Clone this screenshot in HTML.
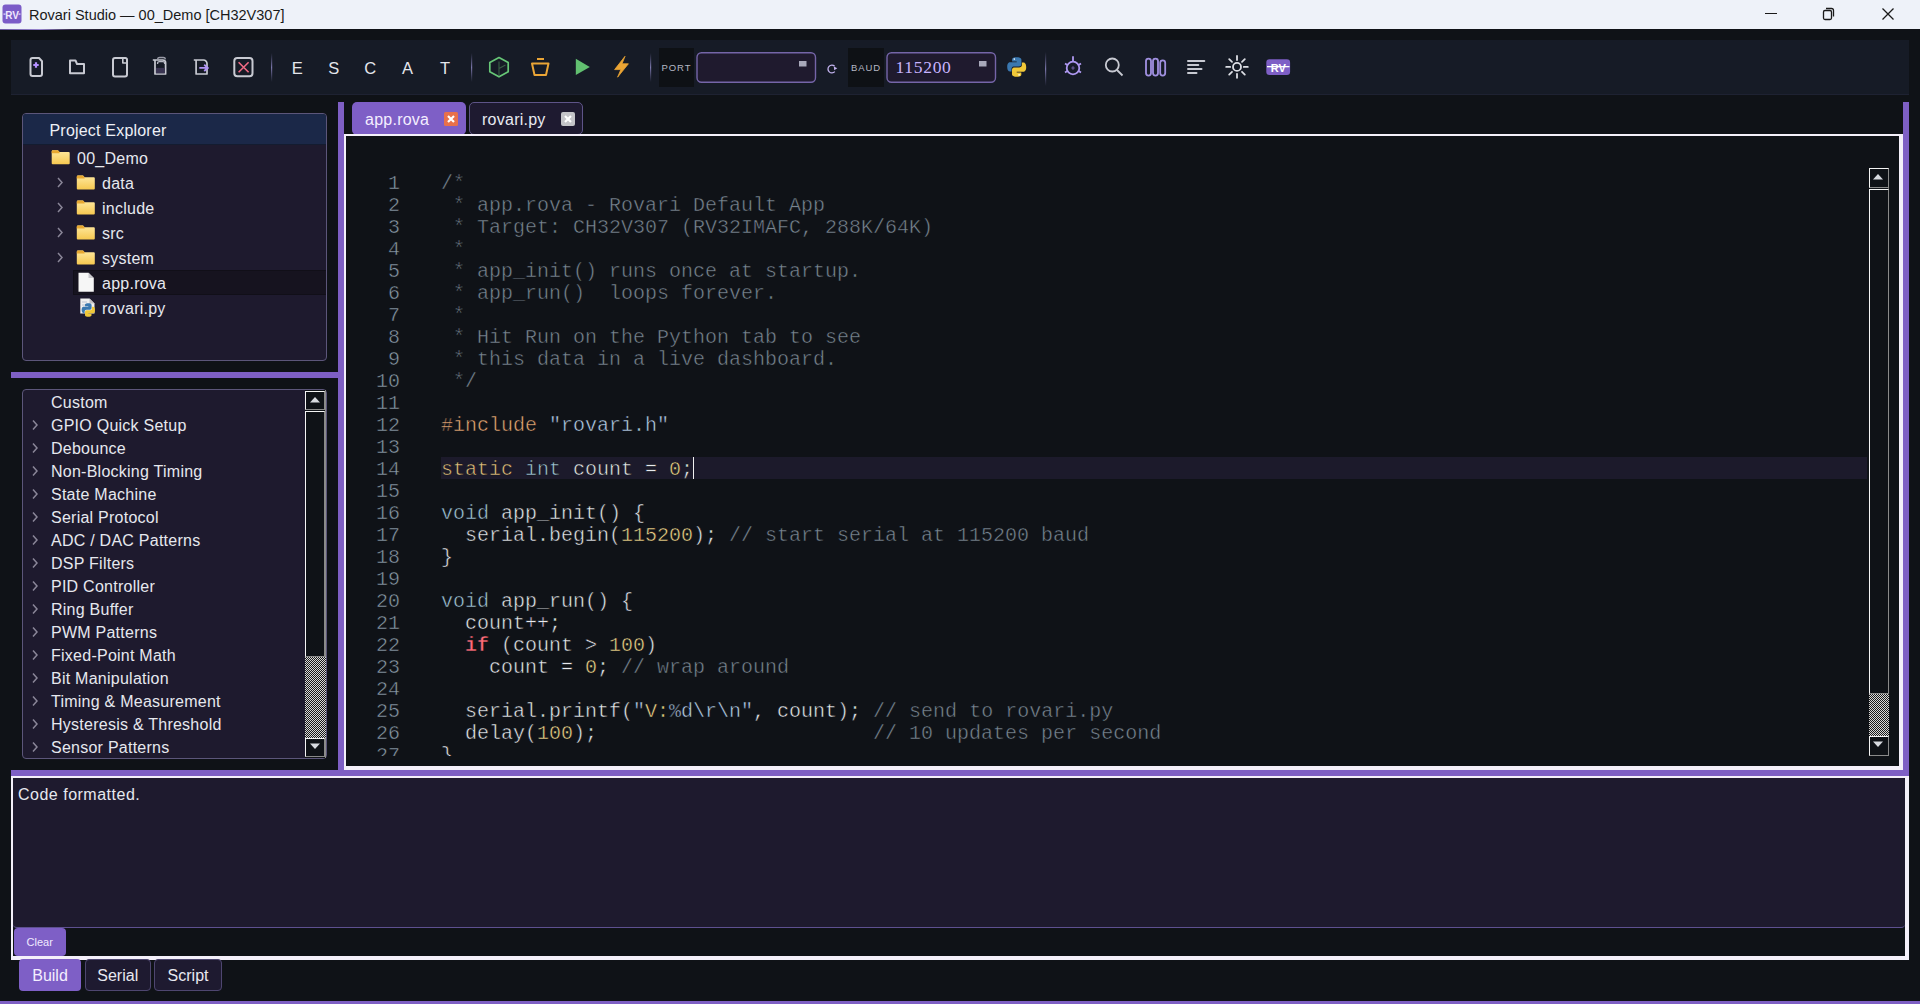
<!DOCTYPE html>
<html><head><meta charset="utf-8">
<style>
*{box-sizing:border-box;margin:0;padding:0}
html,body{width:1920px;height:1004px;overflow:hidden;background:#0f1217;font-family:"Liberation Sans",sans-serif;}
.a{position:absolute}
#title{left:0;top:0;width:1920px;height:29px;background:#eef2f9}
#title .t{left:29px;top:5.5px;font-size:14.5px;color:#1a1a1a;line-height:18px;white-space:pre}
#tline{left:0;top:29px;width:1920px;height:1px;background:linear-gradient(90deg,#6a58a0 0,#9a88d0 40px,#3a3050 70px,#0f1217 120px)}
#toolbar{left:11px;top:40px;width:1898px;height:55px;background:#161b26;border-bottom:1px solid #1e2232}
.sep{width:1px;background:linear-gradient(180deg,rgba(120,115,170,0),#6e6a9a 50%,rgba(120,115,170,0))}
.lbl{background:#0d1014;color:#b4b8c4;font-size:10px;letter-spacing:1px;line-height:38px;text-align:center}
.combo{border:1.5px solid #7565a8;border-radius:5px;background:#1f1a2e}
.sash{background:#7e5fc4}
.panel{background:#1e1a2e;border:1px solid #5c567a;border-radius:4px;overflow:hidden}
.white{border:2px solid #f4f0fa}
.tree{font-size:16px;color:#e6e8ee;line-height:20px;white-space:pre;letter-spacing:0.25px}
.chev{width:6px;height:6px;border-right:1.6px solid #8a8698;border-top:1.6px solid #8a8698;transform:rotate(45deg)}
.code{font-family:"Liberation Mono",monospace;font-size:20px;line-height:22px;white-space:pre;color:#e8eaee;-webkit-text-stroke:0.5px #0f1217}
.ln{color:#8a9aa8;text-align:right;width:60px}
.cm{color:#7a8692}
.kw{color:#e4c080}
.ty{color:#a2c6da}
.nu{color:#f2d68a}
.pp{color:#e8a874}
.st{color:#b8d0ea}
.rd{color:#ff6a78;font-weight:bold}
.sb{background:#0f1217}
.btn3d{border-top:1.5px solid #f4f4f4;border-left:1.5px solid #f4f4f4;border-right:1.5px solid #8a8a8a;border-bottom:1.5px solid #8a8a8a;background:#0f1217}
.checker{background-color:#c8c8c8;background-image:repeating-conic-gradient(#1a1a1a 0 25%,#d8d8d8 0 50%);background-size:2px 2px}
.tbtn{border-radius:4px;font-size:16px;line-height:32px;text-align:center;color:#e8e8f0}
</style></head><body>
<div id="title" class="a">
  <svg class="a" style="left:2px;top:4px" width="20" height="20" viewBox="0 0 20 20"><rect x="0.5" y="0.5" width="19" height="19" rx="3" fill="#7b5cc8"/><text x="10" y="14.5" font-family="Liberation Sans" font-weight="bold" font-size="10" fill="#f0e8ff" text-anchor="middle">RV</text><rect x="1.5" y="9.5" width="2" height="1.2" fill="#e8e0ff"/><rect x="16.5" y="9.5" width="2" height="1.2" fill="#e8e0ff"/></svg>
  <div class="a t">Rovari Studio — 00_Demo [CH32V307]</div>
  <svg class="a" style="left:1760px;top:0" width="160" height="29" viewBox="0 0 160 29">
    <rect x="5" y="13" width="12" height="1" fill="#1a1a1a"/>
    <rect x="63.5" y="10.5" width="8" height="9" rx="1.5" fill="none" stroke="#1a1a1a" stroke-width="1.3"/>
    <path d="M66 8.5h5.5a2 2 0 0 1 2 2v6" fill="none" stroke="#1a1a1a" stroke-width="1.3"/>
    <path d="M122.5 8.5l11 11M133.5 8.5l-11 11" stroke="#1a1a1a" stroke-width="1.3"/>
  </svg>
</div>
<div id="tline" class="a"></div>

<div id="toolbar" class="a"></div>
<svg class="a" style="left:0;top:40px" width="1320" height="55" viewBox="0 40 1320 55">
  <g fill="none" stroke="#c8cad2" stroke-width="2" stroke-linejoin="round">
    <!-- new file -->
    <path d="M32.5 58h6.5l3 3.2v12.8a2 2 0 0 1-2 2h-7.5a2 2 0 0 1-2-2v-14a2 2 0 0 1 2-2z"/>
    <!-- open folder -->
    <path d="M70 60.5h5.5l1.5 3.5h7v9.3h-14z"/>
    <!-- file -->
    <path d="M115 58h10.5a1.5 1.5 0 0 1 1.5 1.5v15a2 2 0 0 1-2 2h-10a2 2 0 0 1-2-2v-14.5a2 2 0 0 1 2-2z"/>
    <path d="M122.8 58.5v4.5h4" stroke-width="1.6"/>
    <!-- save -->
    <path d="M152.8 60h10a2.8 2.8 0 0 1 2.8 2.8v11.2h-10.6v-14" stroke-width="1.7"/>
    <path d="M157.5 59.3a2.2 2.2 0 0 1 2.2-1.8h3.6a2.2 2.2 0 0 1 2.2 1.8" stroke="#9a9ca8" stroke-width="1.4"/>
    <path d="M157.6 64v-0.8a1.6 1.6 0 0 1 1.6-1.6h3.8a1.6 1.6 0 0 1 1.6 1.6v0.8" stroke="#b8bac4" stroke-width="1.3"/>
    <!-- save as -->
    <path d="M193.8 60h9.7a3.5 3.5 0 0 1 3.5 3.5v10.5h-10.9v-14" stroke-width="1.7"/>
    <!-- close -->
    <rect x="234.3" y="58" width="18.2" height="18.2" rx="3"/>
  </g>
  <path d="M33.3 65h5.4M36 62.3v5.4" stroke="#b490ff" stroke-width="2.2"/>
  <rect x="156" y="67.9" width="8.8" height="5.4" fill="#3a3552"/>
  <path d="M199.3 67.9h8.5M204.2 64.8l3.6 3.1-3.6 3.1" fill="none" stroke="#b094f4" stroke-width="1.8"/>
  <path d="M238.6 62.2l10 10M248.6 62.2l-10 10" stroke="#f06a84" stroke-width="1.6"/>
  <!-- separators -->
  <rect x="271" y="53" width="1.2" height="29" fill="url(#sg)"/>
  <rect x="471" y="53" width="1.2" height="29" fill="url(#sg)"/>
  <rect x="650" y="53" width="1.2" height="29" fill="url(#sg)"/>
  <rect x="1045" y="52" width="1.2" height="34" fill="url(#sg)"/>
  <defs><linearGradient id="sg" x1="0" y1="0" x2="0" y2="1"><stop offset="0" stop-color="#6e6a9a" stop-opacity="0"/><stop offset="0.5" stop-color="#7a76aa"/><stop offset="1" stop-color="#6e6a9a" stop-opacity="0"/></linearGradient></defs>
  <!-- letters -->
  <g font-family="Liberation Sans" font-size="16.5" fill="#e4e6ec" text-anchor="middle">
    <text x="297.3" y="74">E</text><text x="333.8" y="74">S</text><text x="370.3" y="74">C</text><text x="407.6" y="74">A</text><text x="445" y="74">T</text>
  </g>
  <!-- hexagon -->
  <g fill="none" stroke="#66c676" stroke-width="1.7" stroke-linejoin="round">
    <path d="M499 57.6l9.2 5v9.2l-9.2 5-9.2-5v-9.2z"/>
  </g>
  <path d="M499 61.5v14M499.5 68.2l6-3.2" stroke="#3a5e46" stroke-width="1.1"/>
  <!-- trash -->
  <g fill="none" stroke="#eaa536" stroke-width="2" stroke-linejoin="round">
    <path d="M537 59h7"/>
    <path d="M532 63.5h16.5l-2.5 11.5h-11.5z"/>
  </g>
  <!-- play -->
  <path d="M575.8 58.8l14 8.1-14 8.1z" fill="#62c070"/>
  <!-- bolt -->
  <path d="M625 56.3L614.6 69.6h6.2L617.6 77.2 628.4 63.8h-6.4z" fill="#eba534" stroke="#eba534" stroke-width="0.8" stroke-linejoin="round"/>
  <!-- PORT label -->
  <rect x="659" y="48" width="35" height="39" fill="#0e1115"/>
  <text x="676.5" y="71" font-family="Liberation Sans" font-size="9.5" letter-spacing="0.9" fill="#b4b8c4" text-anchor="middle">PORT</text>
  <rect x="697" y="52.7" width="118.5" height="29.5" rx="4.5" fill="#1f1a2e" stroke="#7565a8" stroke-width="1.4"/>
  <rect x="799" y="61" width="7.5" height="5.5" fill="#a8a8ba"/>
  <!-- refresh -->
  <path d="M834.6 66.2A3.9 3.9 0 1 0 834.8 71.6" fill="none" stroke="#c4b4f0" stroke-width="1.3"/>
  <path d="M833.8 66.4L837.3 68.3 834.2 70.2z" fill="#c4b4f0"/>
  <!-- BAUD label -->
  <rect x="848" y="48" width="36" height="39" fill="#0e1115"/>
  <text x="866" y="71" font-family="Liberation Sans" font-size="9.5" letter-spacing="0.9" fill="#b4b8c4" text-anchor="middle">BAUD</text>
  <rect x="887" y="52.7" width="108.5" height="29.5" rx="4.5" fill="#1f1a2e" stroke="#7565a8" stroke-width="1.4"/>
  <rect x="979" y="61" width="7.5" height="5.5" fill="#a8a8ba"/>
  <text x="895.5" y="73.4" font-family="Liberation Serif" font-size="17.5" letter-spacing="0.7" fill="#c8b4ff">115200</text>
  <!-- python -->
  <g transform="translate(1007,57)">
    <path d="M9.6 0.3c-4.8 0-4.5 2.1-4.5 2.1v2.2h4.6v0.7H3.3S0.2 4.9 0.2 9.8s2.7 4.7 2.7 4.7h1.6v-2.3s-0.1-2.7 2.7-2.7h4.6s2.6 0 2.6-2.5V2.9S14.8 0.3 9.6 0.3z" fill="#3a78b0"/>
    <path d="M9.8 19.7c4.8 0 4.5-2.1 4.5-2.1v-2.2H9.7v-0.7h6.4s3.1 0.4 3.1-4.5-2.7-4.7-2.7-4.7h-1.6v2.3s0.1 2.7-2.7 2.7H7.6s-2.6 0-2.6 2.5v4.1s-0.4 2.6 4.8 2.6z" fill="#f0c838"/>
    <circle cx="7.3" cy="2.1" r="0.8" fill="#fff"/><circle cx="12.1" cy="17.9" r="0.8" fill="#fff"/>
  </g>
  <!-- bug -->
  <g fill="none" stroke="#ae98f0" stroke-width="1.8">
    <circle cx="1073" cy="68" r="6.3"/>
    <path d="M1073 56.3v5.5M1065 63.5l2.8 1.8M1081 63.5l-2.8 1.8M1065 72.5l2.8-1.8M1081 72.5l-2.8-1.8"/>
  </g>
  <path d="M1071.3 68h3.4M1073 66.3v3.4" stroke="#6c5c9c" stroke-width="1.2"/>
  <!-- search -->
  <g fill="none" stroke="#c8cad2" stroke-width="1.8">
    <circle cx="1112.3" cy="65" r="6.5"/>
    <path d="M1117 70l5.5 5.5"/>
  </g>
  <!-- columns -->
  <g fill="none" stroke="#a090e0" stroke-width="1.8">
    <rect x="1146" y="58.6" width="5" height="17" rx="2.5"/>
    <rect x="1153" y="58.6" width="5" height="17" rx="2.5"/>
    <rect x="1160.2" y="60.3" width="5" height="15.3" rx="2.5"/>
  </g>
  <!-- format -->
  <g stroke="#c8cad2" stroke-width="2" stroke-linecap="round">
    <path d="M1188 61h16.3M1188 65h10.3M1188 69h13.5M1188 73h8.5"/>
  </g>
  <!-- sun -->
  <g fill="none" stroke="#dcdee4" stroke-width="1.8">
    <circle cx="1237" cy="66.9" r="4"/>
    <path d="M1237 56v4M1237 73.8v4M1226.2 66.9h4M1243.8 66.9h4M1229.2 59.1l2.8 2.8M1242 71.8l2.8 2.8M1244.8 59.1l-2.8 2.8M1232 71.8l-2.8 2.8" stroke-linecap="round"/>
  </g>
  <!-- RV logo -->
  <rect x="1266.3" y="59.2" width="23.8" height="15.8" rx="3.2" fill="#7e5fc6"/>
  <text x="1278.2" y="71.6" font-family="Liberation Sans" font-weight="bold" font-size="11" fill="#ffffff" text-anchor="middle">RV</text>
  <rect x="1267" y="66" width="22.5" height="1.3" fill="#ffffff"/>
</svg>

<!-- sashes -->
<div class="a sash" style="left:11px;top:372px;width:327px;height:6px"></div>
<div class="a sash" style="left:338px;top:102px;width:6px;height:674px"></div>
<div class="a sash" style="left:1903px;top:102px;width:6px;height:674px"></div>
<div class="a sash" style="left:11px;top:770px;width:1898px;height:6px"></div>

<!-- explorer -->
<div class="a panel" style="left:22px;top:113px;width:305px;height:248px">
  <div class="a" style="left:0;top:0;width:303px;height:31px;background:#1b2848;border-bottom:1px solid #141c30"></div>
  <div class="a tree" style="left:26.5px;top:7px;color:#eef0f6;letter-spacing:0.2px">Project Explorer</div>
  <div class="a" style="left:50px;top:156px;width:254px;height:25px;background:#16131f;border:1px solid #110f18"></div>
</div>
<svg class="a" style="left:0;top:140px" width="110" height="190" viewBox="0 140 110 190">
  <defs>
    <linearGradient id="fg" x1="0" y1="0" x2="0" y2="1"><stop offset="0" stop-color="#ffe9a0"/><stop offset="1" stop-color="#f6c850"/></linearGradient>
  </defs>
  <g transform="translate(51.7,150.3)"><path d="M0 1.2a1.2 1.2 0 0 1 1.2-1.2h5l1.6 1.8h9.2a1 1 0 0 1 1 1v10.2a1 1 0 0 1-1 1h-16a1 1 0 0 1-1-1z" fill="url(#fg)"/><path d="M0 1.2a1.2 1.2 0 0 1 1.2-1.2h5l1.6 1.8v1.2h-7.8z" fill="#e8a830"/></g>
  <g transform="translate(58,178)"><path d="M0 0l4 4.5-4 4.5" fill="none" stroke="#8a8698" stroke-width="1.5"/></g><g transform="translate(76.8,175.5)"><path d="M0 1.2a1.2 1.2 0 0 1 1.2-1.2h5l1.6 1.8h9.2a1 1 0 0 1 1 1v10.2a1 1 0 0 1-1 1h-16a1 1 0 0 1-1-1z" fill="url(#fg)"/><path d="M0 1.2a1.2 1.2 0 0 1 1.2-1.2h5l1.6 1.8v1.2h-7.8z" fill="#e8a830"/></g>
  <g transform="translate(58,203)"><path d="M0 0l4 4.5-4 4.5" fill="none" stroke="#8a8698" stroke-width="1.5"/></g><g transform="translate(76.8,200.5)"><path d="M0 1.2a1.2 1.2 0 0 1 1.2-1.2h5l1.6 1.8h9.2a1 1 0 0 1 1 1v10.2a1 1 0 0 1-1 1h-16a1 1 0 0 1-1-1z" fill="url(#fg)"/><path d="M0 1.2a1.2 1.2 0 0 1 1.2-1.2h5l1.6 1.8v1.2h-7.8z" fill="#e8a830"/></g>
  <g transform="translate(58,228)"><path d="M0 0l4 4.5-4 4.5" fill="none" stroke="#8a8698" stroke-width="1.5"/></g><g transform="translate(76.8,225.5)"><path d="M0 1.2a1.2 1.2 0 0 1 1.2-1.2h5l1.6 1.8h9.2a1 1 0 0 1 1 1v10.2a1 1 0 0 1-1 1h-16a1 1 0 0 1-1-1z" fill="url(#fg)"/><path d="M0 1.2a1.2 1.2 0 0 1 1.2-1.2h5l1.6 1.8v1.2h-7.8z" fill="#e8a830"/></g>
  <g transform="translate(58,253)"><path d="M0 0l4 4.5-4 4.5" fill="none" stroke="#8a8698" stroke-width="1.5"/></g><g transform="translate(76.8,250.5)"><path d="M0 1.2a1.2 1.2 0 0 1 1.2-1.2h5l1.6 1.8h9.2a1 1 0 0 1 1 1v10.2a1 1 0 0 1-1 1h-16a1 1 0 0 1-1-1z" fill="url(#fg)"/><path d="M0 1.2a1.2 1.2 0 0 1 1.2-1.2h5l1.6 1.8v1.2h-7.8z" fill="#e8a830"/></g>
  <path d="M78.5 272.8h10l5.3 5.3v13.7h-15.3z" fill="#f6f6f6"/>
  <path d="M88.5 272.8v5.3h5.3z" fill="#c8c8cc"/>
  <path d="M80.3 298.6h9.2l5 5v10h-14.2z" fill="#f0f0f0"/>
  <path d="M89.5 298.6v5h5z" fill="#c0c0c4"/>
  <path d="M82 302h5M82 305h7M82 308h5" stroke="#b0b8c8" stroke-width="0.8"/>
  <g transform="translate(81.5,303) scale(0.7)">
    <path d="M9.6 0.3c-4.8 0-4.5 2.1-4.5 2.1v2.2h4.6v0.7H3.3S0.2 4.9 0.2 9.8s2.7 4.7 2.7 4.7h1.6v-2.3s-0.1-2.7 2.7-2.7h4.6s2.6 0 2.6-2.5V2.9S14.8 0.3 9.6 0.3z" fill="#3a78b0"/>
    <path d="M9.8 19.7c4.8 0 4.5-2.1 4.5-2.1v-2.2H9.7v-0.7h6.4s3.1 0.4 3.1-4.5-2.7-4.7-2.7-4.7h-1.6v2.3s0.1 2.7-2.7 2.7H7.6s-2.6 0-2.6 2.5v4.1s-0.4 2.6 4.8 2.6z" fill="#f0c838"/>
  </g>
</svg>
<div class="a tree" style="left:77px;top:149px">00_Demo</div>
<div class="a tree" style="left:102px;top:174px">data</div>
<div class="a tree" style="left:102px;top:199px">include</div>
<div class="a tree" style="left:102px;top:224px">src</div>
<div class="a tree" style="left:102px;top:249px">system</div>
<div class="a tree" style="left:102px;top:274px">app.rova</div>
<div class="a tree" style="left:102px;top:299px">rovari.py</div>

<!-- snippets -->
<div class="a panel" style="left:22px;top:389px;width:305px;height:370px"></div>
<svg class="a" style="left:30px;top:410px" width="12" height="350" viewBox="0 0 12 350">
  <g fill="none" stroke="#8a8698" stroke-width="1.5">
    <path d="M3 10.5l4 4.5-4 4.5M3 33.5l4 4.5-4 4.5M3 56.5l4 4.5-4 4.5M3 79.5l4 4.5-4 4.5M3 102.5l4 4.5-4 4.5M3 125.5l4 4.5-4 4.5M3 148.5l4 4.5-4 4.5M3 171.5l4 4.5-4 4.5M3 194.5l4 4.5-4 4.5M3 217.5l4 4.5-4 4.5M3 240.5l4 4.5-4 4.5M3 263.5l4 4.5-4 4.5M3 286.5l4 4.5-4 4.5M3 309.5l4 4.5-4 4.5M3 332.5l4 4.5-4 4.5"/>
  </g>
</svg>
<div class="a tree" style="left:51px;top:391px;line-height:23px">Custom
GPIO Quick Setup
Debounce
Non-Blocking Timing
State Machine
Serial Protocol
ADC / DAC Patterns
DSP Filters
PID Controller
Ring Buffer
PWM Patterns
Fixed-Point Math
Bit Manipulation
Timing &amp; Measurement
Hysteresis &amp; Threshold
Sensor Patterns</div>
<!-- snippets scrollbar -->
<div class="a" style="left:305px;top:390px;width:21px;height:368px;background:#0f1217;border-right:1px solid #8a8a8a"></div>
<div class="a btn3d" style="left:305px;top:391px;width:20px;height:19px"></div>
<svg class="a" style="left:309px;top:395px" width="12" height="9"><path d="M1 7.5L6 2 11 7.5z" fill="#d8dae0"/></svg>
<div class="a" style="left:305px;top:411px;width:20px;height:246px;border-left:1.5px solid #f4f4f4;border-top:1.5px solid #f4f4f4;border-right:1.5px solid #8a8a8a;border-bottom:1.5px solid #8a8a8a;background:#0f1217"></div>
<div class="a checker" style="left:305px;top:657px;width:21px;height:81px"></div>
<div class="a btn3d" style="left:305px;top:738px;width:20px;height:19px"></div>
<svg class="a" style="left:309px;top:742px" width="12" height="9"><path d="M1 1.5L6 7 11 1.5z" fill="#d8dae0"/></svg>

<!-- editor frame -->
<div class="a white" style="left:344px;top:134px;width:1559px;height:636px;background:#0f1217;border-right-width:4px;border-bottom-width:4px"></div>
<!-- tabs -->
<div class="a" style="left:352px;top:102px;width:114px;height:33px;background:#7e5fc6;border-radius:5px"></div>
<div class="a tree" style="left:365px;top:110px;color:#f4eeff">app.rova</div>
<svg class="a" style="left:444px;top:112px" width="14" height="14"><rect x="0" y="0" width="14" height="14" rx="1.5" fill="#e8704a"/><path d="M4 4l6 6M10 4l-6 6" stroke="#fff" stroke-width="2.2"/></svg>
<div class="a" style="left:469px;top:102px;width:114px;height:33px;background:#1e1a30;border:1px solid #5e5488;border-radius:5px"></div>
<div class="a tree" style="left:482px;top:110px;color:#e8eaf0">rovari.py</div>
<svg class="a" style="left:561px;top:112px" width="14" height="14"><rect x="0" y="0" width="14" height="14" rx="2" fill="#c4c4c8"/><path d="M4 4l6 6M10 4l-6 6" stroke="#fff" stroke-width="2.2"/></svg>
<div class="a" style="left:346px;top:134px;width:1555px;height:2px;background:#f4f0fa"></div>
<!-- current line -->
<div class="a" style="left:441px;top:457px;width:1426px;height:22px;background:#1c1a2b"></div>
<div class="a" style="left:692.5px;top:457px;width:1.5px;height:22px;background:#f0f0f0"></div>
<!-- code -->
<div class="a" style="left:346px;top:167px;width:1520px;height:589px;overflow:hidden">
<div class="a code ln" style="left:-6px;top:6px">1
2
3
4
5
6
7
8
9
10
11
12
13
14
15
16
17
18
19
20
21
22
23
24
25
26
27</div>
<div class="a code" style="left:95px;top:6px"><span class="cm">/*
 * app.rova - Rovari Default App
 * Target: CH32V307 (RV32IMAFC, 288K/64K)
 *
 * app_init() runs once at startup.
 * app_run()  loops forever.
 *
 * Hit Run on the Python tab to see
 * this data in a live dashboard.
 */</span>

<span class="pp">#include</span> <span class="st">"rovari.h"</span>

<span class="kw">static</span> <span class="ty">int</span> count = <span class="nu">0</span>;

<span class="ty">void</span> app_init() {
  serial.begin(<span class="nu">115200</span>); <span class="cm">// start serial at 115200 baud</span>
}

<span class="ty">void</span> app_run() {
  count++;
  <span class="rd">if</span> (count &gt; <span class="nu">100</span>)
    count = <span class="nu">0</span>; <span class="cm">// wrap around</span>

  serial.printf(<span class="st">"<span class="nu">V:</span>%d\r\n"</span>, count); <span class="cm">// send to rovari.py</span>
  delay(<span class="nu">100</span>);                       <span class="cm">// 10 updates per second</span>
}</div>
</div>
<!-- editor scrollbar -->
<div class="a" style="left:1869px;top:168px;width:20px;height:588px;background:#0f1217;border-right:1px solid #6a6a6a"></div>
<div class="a btn3d" style="left:1869px;top:168px;width:19.5px;height:19.5px"></div>
<svg class="a" style="left:1872px;top:172px" width="12" height="9"><path d="M1 7.5L6 2 11 7.5z" fill="#d8dae0"/></svg>
<div class="a" style="left:1869px;top:189px;width:19.5px;height:505px;border-left:1.3px solid #f4f4f4;border-top:1.3px solid #f4f4f4;border-right:1.3px solid #8a8a8a;border-bottom:1.3px solid #8a8a8a;background:#0f1217"></div>
<div class="a checker" style="left:1869px;top:694px;width:20px;height:42px"></div>
<div class="a btn3d" style="left:1869px;top:736px;width:19.5px;height:19.5px"></div>
<svg class="a" style="left:1872px;top:740px" width="12" height="9"><path d="M1 1.5L6 7 11 1.5z" fill="#d8dae0"/></svg>

<!-- output -->
<div class="a" style="left:11px;top:776px;width:1898px;height:184px;border:2px solid #f4f0fa;border-right-width:4px;border-bottom-width:4px;background:#0f1217"></div>
<div class="a" style="left:13px;top:778px;width:1892px;height:150px;background:#1e1a2e;border-bottom:1px solid #5e5090;border-radius:0 3px 4px 4px"></div>
<div class="a tree" style="left:18px;top:785px;color:#e6e8ee;letter-spacing:0.5px">Code formatted.</div>
<div class="a tbtn" style="left:13.5px;top:928px;width:52.5px;height:27.5px;background:#7e5fc6;font-size:11px;line-height:28px;color:#f0eaff">Clear</div>
<div class="a tbtn" style="left:19px;top:958.5px;width:62px;height:32px;background:#7e5fc6;color:#f4eeff;line-height:34px">Build</div>
<div class="a tbtn" style="left:84.5px;top:958.5px;width:66.5px;height:32px;background:#1e1a30;border:1px solid #4e4670;line-height:32px">Serial</div>
<div class="a tbtn" style="left:154.3px;top:958.5px;width:67.5px;height:32px;background:#1e1a30;border:1px solid #4e4670;line-height:32px">Script</div>
<div class="a" style="left:0;top:1001px;width:1920px;height:3px;background:#7e5fc4"></div>
</body></html>
